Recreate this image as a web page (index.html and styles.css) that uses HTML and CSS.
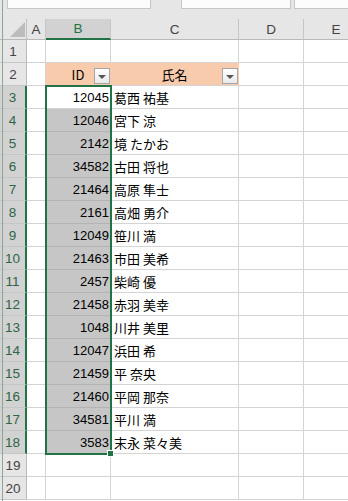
FILE: index.html
```html
<!DOCTYPE html>
<html lang="ja">
  <head>
    <meta charset="UTF-8" />
    <title>Sheet1</title>
    <link rel="stylesheet" href="styles.css">
  </head>
  <body>
    <div class="window">
      <div class="toolbar">
        <div class="box namebox"></div>
        <div class="box mid"></div>
        <div class="box last"></div>
      </div>

      <div class="sheet">
        <div class="corner"><i></i></div>
        <div class="ch">A</div>
        <div class="ch active">B</div>
        <div class="ch">C</div>
        <div class="ch">D</div>
        <div class="ch">E</div>

        <div class="rh">1</div><div class="c"></div><div class="c"></div><div class="c"></div><div class="c"></div><div class="c"></div>
        <div class="rh">2</div><div class="c"></div>
        <div class="c hdr">ID<button class="filter"></button></div>
        <div class="c hdr">氏名<button class="filter"></button></div>
        <div class="c"></div><div class="c"></div>

        <div class="rh active">3</div><div class="c"></div><div class="c num">12045</div><div class="c name">葛西 祐基</div><div class="c"></div><div class="c"></div>
        <div class="rh active">4</div><div class="c"></div><div class="c num sel">12046</div><div class="c name">宮下 涼</div><div class="c"></div><div class="c"></div>
        <div class="rh active">5</div><div class="c"></div><div class="c num sel">2142</div><div class="c name">境 たかお</div><div class="c"></div><div class="c"></div>
        <div class="rh active">6</div><div class="c"></div><div class="c num sel">34582</div><div class="c name">古田 将也</div><div class="c"></div><div class="c"></div>
        <div class="rh active">7</div><div class="c"></div><div class="c num sel">21464</div><div class="c name">高原 隼士</div><div class="c"></div><div class="c"></div>
        <div class="rh active">8</div><div class="c"></div><div class="c num sel">2161</div><div class="c name">高畑 勇介</div><div class="c"></div><div class="c"></div>
        <div class="rh active">9</div><div class="c"></div><div class="c num sel">12049</div><div class="c name">笹川 満</div><div class="c"></div><div class="c"></div>
        <div class="rh active">10</div><div class="c"></div><div class="c num sel">21463</div><div class="c name">市田 美希</div><div class="c"></div><div class="c"></div>
        <div class="rh active">11</div><div class="c"></div><div class="c num sel">2457</div><div class="c name">柴崎 優</div><div class="c"></div><div class="c"></div>
        <div class="rh active">12</div><div class="c"></div><div class="c num sel">21458</div><div class="c name">赤羽 美幸</div><div class="c"></div><div class="c"></div>
        <div class="rh active">13</div><div class="c"></div><div class="c num sel">1048</div><div class="c name">川井 美里</div><div class="c"></div><div class="c"></div>
        <div class="rh active">14</div><div class="c"></div><div class="c num sel">12047</div><div class="c name">浜田 希</div><div class="c"></div><div class="c"></div>
        <div class="rh active">15</div><div class="c"></div><div class="c num sel">21459</div><div class="c name">平 奈央</div><div class="c"></div><div class="c"></div>
        <div class="rh active">16</div><div class="c"></div><div class="c num sel">21460</div><div class="c name">平岡 那奈</div><div class="c"></div><div class="c"></div>
        <div class="rh active">17</div><div class="c"></div><div class="c num sel">34581</div><div class="c name">平川 満</div><div class="c"></div><div class="c"></div>
        <div class="rh active">18</div><div class="c"></div><div class="c num sel">3583</div><div class="c name">末永 菜々美</div><div class="c"></div><div class="c"></div>
        <div class="rh">19</div><div class="c"></div><div class="c"></div><div class="c"></div><div class="c"></div><div class="c"></div>
        <div class="rh">20</div><div class="c"></div><div class="c"></div><div class="c"></div><div class="c"></div><div class="c"></div>

        <!-- selection B3:B18 -->
        <div class="selection"><span class="handle"></span></div>
      </div>
    </div>
  </body>
</html>
```

FILE: styles.css
```css
html,
body {
  margin: 0;
  padding: 0;
  height: 100%;
  background: #fff;
}

body {
  font-family: "Liberation Sans", "Noto Sans CJK JP", sans-serif;
  font-size: 13px;
  color: #000;
  overflow: hidden;
}

button {
  margin: 0;
  padding: 0;
  border: 0;
  background: none;
  font: inherit;
  -webkit-appearance: none;
  appearance: none;
}

.window {
  position: relative;
  width: 348px;
  height: 501px;
  overflow: hidden;
}

.window::before {
  content: "";
  position: absolute;
  left: 2px;
  top: 0;
  bottom: 0;
  width: 1px;
  background: #8ea696;
  z-index: 5;
}

/* formula bar leftovers */
.toolbar {
  height: 19px;
  background: #e6e6e6;
  display: flex;
  align-items: flex-start;
}

.toolbar .box {
  box-sizing: border-box;
  height: 9px;
  background: #fcfcfc;
  border: 1px solid #c6c6c6;
  border-top: 0;
}

.toolbar .namebox {
  margin-left: 7px;
  width: 144px;
}

.toolbar .mid {
  margin-left: 30px;
  width: 110px;
}

.toolbar .last {
  margin-left: 3px;
  flex: 1;
  border-right: 0;
}

/* grid */
.sheet {
  position: relative;
  display: grid;
  grid-template-columns: 27px 19px 65px 128px 65px 65px;
  grid-template-rows: 21px;
  grid-auto-rows: 23px;
}

.sheet > div {
  box-sizing: border-box;
  border-right: 1px solid #d4d4d4;
  border-bottom: 1px solid #d4d4d4;
  display: flex;
  align-items: center;
  white-space: nowrap;
  overflow: hidden;
}

.sheet > .corner {
  background: #e6e6e6;
  border-right-color: #c0c0c0;
  border-bottom-color: #b9b9b9;
  justify-content: flex-end;
  align-items: flex-end;
  padding: 0 1px 2px 0;
}
.corner i {
  width: 0;
  height: 0;
  border-left: 15px solid transparent;
  border-bottom: 15px solid #bcbcbc;
}

.sheet > .ch {
  background: #e6e6e6;
  border-right-color: #c6c6c6;
  border-bottom-color: #b9b9b9;
  justify-content: center;
  color: #444;
  font-size: 13.5px;
}
.sheet > .ch.active {
  background: #d2d2d2;
  color: #217346;
  border-bottom: 2px solid #217346;
}

.sheet > .rh {
  background: #e6e6e6;
  border-right-color: #b9b9b9;
  border-bottom-color: #c6c6c6;
  justify-content: center;
  color: #444;
  font-size: 13.5px;
}
.sheet > .rh.active {
  background: #d2d2d2;
  color: #2f6446;
  border-right: 2px solid #217346;
}

.sheet > .num {
  justify-content: flex-end;
  padding-right: 1px;
}

.sheet > .name {
  padding-left: 3px;
  font-family: "Noto Sans CJK JP", sans-serif;
}

.sheet > .sel {
  background: #c6c6c6;
  border-bottom-color: #b4b4b4;
}

.sheet > .hdr {
  position: relative;
  background: #f8cbad;
  border-right-color: #f8cbad;
  justify-content: center;
  font-family: "Noto Sans CJK JP", sans-serif;
}

.filter {
  position: absolute;
  right: 0;
  bottom: 1px;
  box-sizing: border-box;
  width: 16px;
  height: 16px;
  border: 1px solid #a6a6a6;
  background: linear-gradient(#ffffff, #e9e9e9);
  display: flex;
  align-items: center;
  justify-content: center;
}
.filter::after {
  content: "";
  width: 0;
  height: 0;
  margin-top: 1px;
  border-left: 4px solid transparent;
  border-right: 4px solid transparent;
  border-top: 4px solid #555;
}

.sheet > .selection {
  position: absolute;
  left: 45px;
  top: 66px;
  width: 67px;
  height: 370px;
  border: 2px solid #217346;
  overflow: visible;
  pointer-events: none;
}

.handle {
  position: absolute;
  right: -4px;
  bottom: -4px;
  width: 5px;
  height: 5px;
  background: #217346;
  border: 1px solid #fff;
}
```
